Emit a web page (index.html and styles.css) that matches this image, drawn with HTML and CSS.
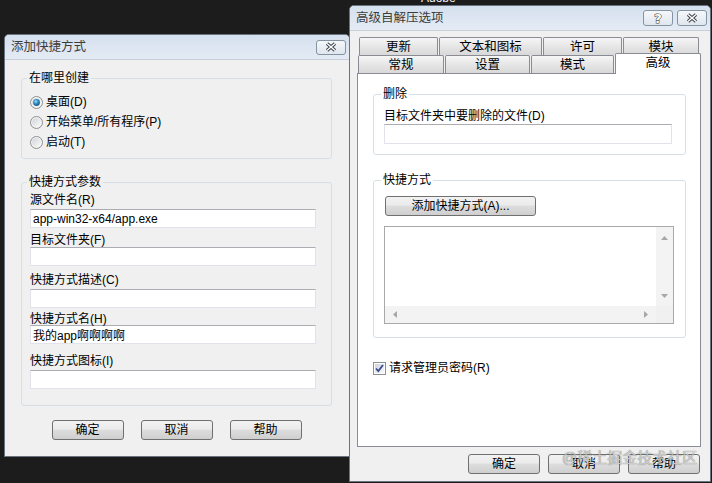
FILE: index.html
```html
<!DOCTYPE html>
<html lang="zh-CN">
<head>
    <meta charset="UTF-8">
    <meta name="viewport" content="width=device-width, initial-scale=1.0">
    <title>添加快捷方式</title>

    <link rel="stylesheet" href="styles.css">

</head>
<body>
<div class="desktop">
    <span class="desk-label">Adobe</span>

    <!-- 高级自解压选项 -->
    <div class="window win-sfx">
        <div class="titlebar">
            <span class="title">高级自解压选项</span>
            <span class="cap-btn cap-help">
                <svg width="14" height="14" viewBox="0 0 14 14"><text x="7" y="12" text-anchor="middle" class="help-glyph">?</text></svg>
            </span>
            <span class="cap-btn">
                <svg width="14" height="10" viewBox="0 0 14 10"><path d="M3 1.5 L11 8.5 M11 1.5 L3 8.5" class="x-outer"/><path d="M3 1.5 L11 8.5 M11 1.5 L3 8.5" class="x-inner"/></svg>
            </span>
        </div>
        <div class="client">
            <div class="tab-row tab-row-back">
                <span class="tab">更新</span>
                <span class="tab">文本和图标</span>
                <span class="tab">许可</span>
                <span class="tab">模块</span>
            </div>
            <div class="tab-row tab-row-front">
                <span class="tab">常规</span>
                <span class="tab">设置</span>
                <span class="tab">模式</span>
                <span class="tab active">高级</span>
            </div>
            <div class="tab-panel">
                <fieldset class="group group-delete">
                    <legend>删除</legend>
                    <label class="field-label" for="delFiles">目标文件夹中要删除的文件(D)</label>
                    <input type="text" id="delFiles" class="textbox textbox-wide">
                </fieldset>

                <fieldset class="group group-links">
                    <legend>快捷方式</legend>
                    <button type="button" class="btn btn-add">添加快捷方式(A)...</button>
                    <div class="listbox">
                        <div class="list-area"></div>
                        <div class="vscroll">
                            <svg width="7" height="4" viewBox="0 0 7 4"><polygon points="0,4 7,4 3.5,0" class="arrow"/></svg>
                            <svg width="7" height="4" viewBox="0 0 7 4"><polygon points="0,0 7,0 3.5,4" class="arrow"/></svg>
                        </div>
                        <div class="hscroll">
                            <svg width="4" height="7" viewBox="0 0 4 7"><polygon points="4,0 4,7 0,3.5" class="arrow"/></svg>
                            <svg width="4" height="7" viewBox="0 0 4 7"><polygon points="0,0 0,7 4,3.5" class="arrow"/></svg>
                        </div>
                        <div class="scroll-corner"></div>
                    </div>
                </fieldset>

                <label class="check-row">
                    <svg width="13" height="13" viewBox="0 0 13 13">
                        <defs>
                            <linearGradient id="boxFill" x1="0" y1="0" x2="1" y2="1">
                                <stop offset="0" stop-color="#cfd3da"/>
                                <stop offset="1" stop-color="#f7f8f9"/>
                            </linearGradient>
                        </defs>
                        <rect x="0.5" y="0.5" width="12" height="12" fill="#fff" stroke="#8e8f8f"/>
                        <rect x="2" y="2" width="9" height="9" fill="url(#boxFill)"/>
                        <path d="M3 6.5 L5.3 9 L10 3" fill="none" stroke="#3a4c8c" stroke-width="1.8"/>
                    </svg>
                    <span>请求管理员密码(R)</span>
                </label>
            </div>

            <div class="button-row button-row-right">
                <button type="button" class="btn">确定</button>
                <button type="button" class="btn">取消</button>
                <button type="button" class="btn">帮助</button>
            </div>
        </div>
    </div>

    <!-- 添加快捷方式 -->
    <div class="window win-shortcut">
        <div class="titlebar">
            <span class="title">添加快捷方式</span>
            <span class="cap-btn cap-close">
                <svg width="14" height="10" viewBox="0 0 14 10"><path d="M3 1.5 L11 8.5 M11 1.5 L3 8.5" class="x-outer"/><path d="M3 1.5 L11 8.5 M11 1.5 L3 8.5" class="x-inner"/></svg>
            </span>
        </div>
        <div class="client">
            <fieldset class="group group-where">
                <legend>在哪里创建</legend>
                <label class="radio-row">
                    <svg width="13" height="13" viewBox="0 0 13 13">
                        <defs>
                            <radialGradient id="dotFill" cx="0.4" cy="0.35" r="0.7">
                                <stop offset="0" stop-color="#9fdcf6"/>
                                <stop offset="0.5" stop-color="#2e8ac0"/>
                                <stop offset="1" stop-color="#15507e"/>
                            </radialGradient>
                            <linearGradient id="ringFill" x1="0" y1="0" x2="1" y2="1">
                                <stop offset="0" stop-color="#d2d4d8"/>
                                <stop offset="1" stop-color="#fbfbfb"/>
                            </linearGradient>
                        </defs>
                        <circle cx="6.5" cy="6.5" r="6" fill="#f3f3f3" stroke="#8e8f8f"/>
                        <circle cx="6.5" cy="6.5" r="4.5" fill="url(#ringFill)"/>
                        <circle cx="6.5" cy="6.5" r="3.4" fill="url(#dotFill)"/>
                    </svg>
                    <span>桌面(D)</span>
                </label>
                <label class="radio-row">
                    <svg width="13" height="13" viewBox="0 0 13 13">
                        <circle cx="6.5" cy="6.5" r="6" fill="#f3f3f3" stroke="#8e8f8f"/>
                        <circle cx="6.5" cy="6.5" r="4.5" fill="url(#ringFill)"/>
                    </svg>
                    <span>开始菜单/所有程序(P)</span>
                </label>
                <label class="radio-row">
                    <svg width="13" height="13" viewBox="0 0 13 13">
                        <circle cx="6.5" cy="6.5" r="6" fill="#f3f3f3" stroke="#8e8f8f"/>
                        <circle cx="6.5" cy="6.5" r="4.5" fill="url(#ringFill)"/>
                    </svg>
                    <span>启动(T)</span>
                </label>
            </fieldset>

            <fieldset class="group group-params">
                <legend>快捷方式参数</legend>
                <div class="field field-first">
                    <label class="field-label" for="srcName">源文件名(R)</label>
                    <input type="text" id="srcName" class="textbox" value="app-win32-x64/app.exe">
                </div>
                <div class="field field-snug">
                    <label class="field-label" for="destDir">目标文件夹(F)</label>
                    <input type="text" id="destDir" class="textbox">
                </div>
                <div class="field field-loose">
                    <label class="field-label" for="linkDesc">快捷方式描述(C)</label>
                    <input type="text" id="linkDesc" class="textbox">
                </div>
                <div class="field field-overlap">
                    <label class="field-label" for="linkName">快捷方式名(H)</label>
                    <input type="text" id="linkName" class="textbox" value="我的app啊啊啊啊">
                </div>
                <div class="field field-last">
                    <label class="field-label" for="linkIcon">快捷方式图标(I)</label>
                    <input type="text" id="linkIcon" class="textbox">
                </div>
            </fieldset>

            <div class="button-row">
                <button type="button" class="btn">确定</button>
                <button type="button" class="btn">取消</button>
                <button type="button" class="btn">帮助</button>
            </div>
        </div>
    </div>

    <div class="watermark">@稀土掘金技术社区</div>
</div>
</body>
</html>
```

FILE: styles.css
```css
* {
    box-sizing: border-box;
}

body {
    margin: 0;
    background-color: #1c1c1c;
}

.desktop {
    position: relative;
    width: 712px;
    height: 483px;
    overflow: hidden;
    background-color: #1c1c1c;
    font-family: "Liberation Sans", "Noto Sans CJK SC", sans-serif;
    font-size: 12px;
    color: #000;
}

.desk-label {
    position: absolute;
    left: 421px;
    top: -9px;
    color: #f2f2f2;
    font-size: 12px;
    line-height: 14px;
}

.watermark {
    position: absolute;
    left: 562px;
    top: 450px;
    z-index: 5;
    font-size: 15px;
    line-height: 16px;
    color: rgba(220, 220, 220, 0.85);
    text-shadow: 0 0 1px rgba(60, 60, 60, 0.8);
}

/* windows */
.window {
    position: absolute;
    display: flex;
    flex-direction: column;
    border: 1px solid #6a7480;
    border-radius: 5px 5px 0 0;
    background-color: #f0f0f0;
    overflow: hidden;
}

.win-shortcut {
    left: 4px;
    top: 34px;
    width: 346px;
    height: 423px;
    z-index: 2;
}

.win-sfx {
    left: 349px;
    top: 5px;
    width: 362px;
    height: 477px;
}

.titlebar {
    display: flex;
    align-items: center;
    gap: 4px;
    height: 24px;
    padding: 0 3px 0 6px;
    background: linear-gradient(#d5e0ee, #e4ebf5);
}

.title {
    flex: 1;
    color: #3c3c3c;
    font-size: 12.5px;
    line-height: 16px;
}

.cap-btn {
    display: flex;
    align-items: center;
    justify-content: center;
    width: 30px;
    height: 16px;
    border: 1px solid #8693a3;
    border-radius: 3px;
    background: linear-gradient(#f5f8fb, #dfe6ee);
}

.cap-close {
    height: 15px;
}

.x-outer {
    stroke: #3a3f47;
    stroke-width: 3.4;
    fill: none;
}

.x-inner {
    stroke: #ffffff;
    stroke-width: 1.4;
    fill: none;
}

.help-glyph {
    font-family: "DejaVu Sans", sans-serif;
    font-size: 13px;
    font-weight: bold;
    fill: #ffffff;
    stroke: #3a3f47;
    stroke-width: 1.1;
    paint-order: stroke;
}

.client {
    flex: 1;
    display: flex;
    flex-direction: column;
    border-top: 1px solid #c6cfda;
    background-color: #f0f0f0;
}

.win-shortcut .client {
    padding: 11px 17px 0 16px;
}

.win-sfx .client {
    padding: 6px 9px 0 7px;
}

/* group boxes */
fieldset.group {
    margin: 0;
    min-width: 0;
    border: 1px solid #d5dfe5;
    border-radius: 3px;
}

fieldset.group legend {
    margin-left: -3px;
    padding: 0 2px;
    line-height: 14px;
}

.group-where {
    padding: 7px 8px 6px;
}

.group-params {
    margin-top: 16px !important;
    padding: 3px 8px 16px;
}

.radio-row {
    display: flex;
    align-items: center;
    height: 20px;
    line-height: 14px;
}

.radio-row svg {
    margin-right: 3px;
}

.field-label {
    display: block;
    line-height: 16px;
}

.textbox {
    display: block;
    width: 286px;
    height: 19px;
    margin: 1px 0 0;
    padding: 0 2px;
    border: 1px solid #e2e3ea;
    border-top-color: #abadb3;
    background-color: #fff;
    font: inherit;
    color: #000;
    outline: none;
}

/* the rows of the old dialog are not evenly spaced */
.field-snug {
    margin-top: 4px;
}

.field-snug .textbox {
    margin-top: -1px;
}

.field-loose {
    margin-top: 6px;
}

.field-overlap {
    margin-top: 3px;
}

.field-overlap .textbox {
    margin-top: -2px;
}

.field-last {
    margin-top: 9px;
}

/* buttons */
.btn {
    width: 72px;
    height: 20px;
    padding: 0;
    border: 1px solid #707070;
    border-radius: 3px;
    background: linear-gradient(#f2f2f2 0%, #ebebeb 45%, #dddddd 50%, #cfcfcf 100%);
    font: inherit;
    color: #000;
    line-height: 16px;
}

.button-row {
    display: flex;
    justify-content: center;
    gap: 17px;
    margin-top: 14px;
}

.button-row-right {
    justify-content: flex-end;
    gap: 8px;
    margin-top: 7px;
    margin-right: 1px;
}

/* tabs */
.tab-row {
    display: grid;
    grid-auto-rows: 18px;
    column-gap: 1px;
}

.tab-row-back {
    grid-template-columns: 79px 103px 79px 76px;
    margin-left: 2px;
}

.tab-row-front {
    grid-template-columns: 86px 85px 83px 86px;
    margin-left: 1px;
}

.tab {
    display: flex;
    align-items: center;
    justify-content: center;
    border: 1px solid #898c95;
    border-bottom: none;
    border-radius: 2px 2px 0 0;
    background: linear-gradient(#f6f6f6, #e6e6e6 50%, #d9d9d9);
    font-size: 12.5px;
    line-height: 14px;
}

.tab.active {
    position: relative;
    z-index: 1;
    margin-top: -2px;
    margin-bottom: -1px;
    background: #fff;
    padding-bottom: 3px;
}

.tab-panel {
    height: 374px;
    padding: 13px 14px 0 15px;
    border: 1px solid #898c95;
    background-color: #fff;
}

.group-delete {
    padding: 8px 13px 10px 10px;
}

.group-delete .field-label {
    line-height: 15px;
}

.textbox-wide {
    width: 288px;
    height: 20px;
    margin-top: 0;
}

.group-links {
    margin-top: 18px !important;
    padding: 9px 11px 13px 10px;
}

.btn-add {
    display: block;
    width: 151px;
    margin-left: 1px;
}

.listbox {
    display: grid;
    grid-template-columns: 1fr 17px;
    grid-template-rows: 1fr 17px;
    width: 290px;
    height: 98px;
    margin-top: 10px;
    border: 1px solid #a9a9a9;
    background-color: #fff;
}

.vscroll {
    display: flex;
    flex-direction: column;
    align-items: center;
    justify-content: space-between;
    padding: 9px 0 8px;
    background-color: #f3f3f3;
}

.hscroll {
    display: flex;
    align-items: center;
    justify-content: space-between;
    padding: 0 8px;
    background-color: #f3f3f3;
}

.scroll-corner {
    background-color: #f0f0f0;
}

.arrow {
    fill: #a7a7a7;
}

.check-row {
    display: flex;
    align-items: center;
    height: 14px;
    margin-top: 23px;
    line-height: 14px;
}

.check-row svg {
    margin-right: 3px;
}
```
